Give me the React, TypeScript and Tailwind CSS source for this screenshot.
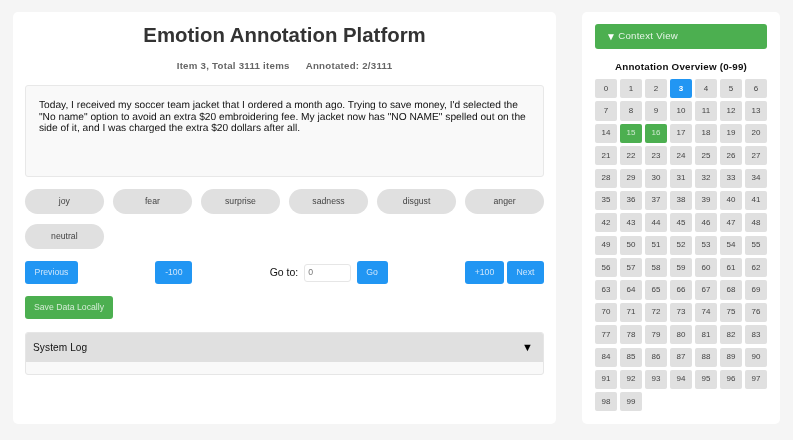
import React from "react";

const emotions = ["joy", "fear", "surprise", "sadness", "disgust", "anger", "neutral"];
const blueBtn = "h-[23px] rounded-[3px] bg-[#2196f3] text-[8.7px] text-[#cfe6fb] flex items-center justify-center";

export default function App() {
  return (
    <div className="h-[440px] w-[793px] overflow-hidden bg-[#f5f5f5] pt-[12px] pl-[13px] flex gap-[26px] font-['Liberation_Sans',Arial,sans-serif] blur-[0.25px]">
      <main className="w-[543px] h-[412px] rounded-[5px] bg-white px-[12px] pt-[11px] flex flex-col">
        <h1 className="text-center text-[20.4px] leading-[25px] font-bold text-[#333]">Emotion Annotation Platform</h1>
        <div className="mt-[12px] flex justify-center gap-[16px] text-[9.7px] leading-[12px] font-bold text-[#666] tracking-[0.25px]">
          <span>Item 3, Total 3111 items</span>
          <span>Annotated: 2/3111</span>
        </div>
        <div className="mt-[13px] h-[92px] rounded-[3px] border border-[#e8e8e8] bg-[#f9f9f9] px-[13px] pt-[14px] text-[10.2px] leading-[11.6px] text-[#111] [text-rendering:geometricPrecision]">
          Today, I received my soccer team jacket that I ordered a month ago. Trying to save money, I'd selected the "No name" option to avoid an extra $20 embroidering fee. My jacket now has "NO NAME" spelled out on the side of it, and I was charged the extra $20 dollars after all.
        </div>
        <div className="mt-[12px] grid grid-cols-6 gap-x-[9.4px] gap-y-[10px]">
          {emotions.map((e) => (
            <div key={e} className="h-[25px] rounded-full bg-[#e0e0e0] flex items-center justify-center text-[8.7px] text-[#444]">{e}</div>
          ))}
        </div>
        <div className="mt-[12px] flex items-center justify-between">
          <div className={`${blueBtn} w-[53px]`}>Previous</div>
          <div className={`${blueBtn} w-[37px]`}>-100</div>
          <div className="flex items-center">
            <span className="w-[28px] whitespace-nowrap text-[10.5px] text-[#111]">Go to:</span>
            <div className="ml-[6px] h-[18px] w-[47px] rounded-[3px] border border-[#e6e6e6] bg-white pl-[3.5px] flex items-center text-[8.7px] text-[#777]">0</div>
            <div className={`${blueBtn} ml-[6px] w-[31px]`}>Go</div>
          </div>
          <div className="flex gap-[3px]">
            <div className={`${blueBtn} w-[39px]`}>+100</div>
            <div className={`${blueBtn} w-[37px]`}>Next</div>
          </div>
        </div>
        <div className="mt-[12px] h-[23px] w-[88px] rounded-[3px] bg-[#4caf50] flex items-center justify-center text-[8.7px] text-[#d5ecd6]">Save Data Locally</div>
        <div className="mt-[13px] h-[43px] rounded-[3px] border border-[#e6e6e6] bg-[#f9f9f9] overflow-hidden">
          <div className="h-[29px] bg-[#e0e0e0] pl-[7px] pr-[10px] flex items-center justify-between text-[10.1px] text-[#111] tracking-[0.1px]">
            <span>System Log</span>
            <span className="text-[11px] text-black">▼</span>
          </div>
        </div>
      </main>
      <aside className="w-[198px] h-[412px] rounded-[5px] bg-white px-[13px] pt-[12px]">
        <div className="h-[25px] rounded-[3px] bg-[#4caf50] pl-[11px] flex items-center gap-[2px] text-[9.7px] text-[#e6f4e7] tracking-[0.25px]">
          <span className="text-[10px] text-white">▼</span>
          <span>Context View</span>
        </div>
        <h2 className="mt-[12px] text-center text-[9.8px] leading-[12px] font-bold text-[#111] tracking-[0.2px]">Annotation Overview (0-99)</h2>
        <div className="mt-[6px] grid grid-cols-7 gap-x-[3.2px] gap-y-[3.2px]">
          {Array.from({ length: 100 }, (_, i) => (
            <div
              key={i}
              className={
                i === 3
                  ? "h-[19.2px] rounded-[2px] bg-[#2196f3] text-white font-bold flex items-center justify-center text-[8px]"
                  : i === 15 || i === 16
                  ? "h-[19.2px] rounded-[2px] bg-[#4caf50] text-[#cfe9d0] flex items-center justify-center text-[8px]"
                  : "h-[19.2px] rounded-[2px] bg-[#e0e0e0] text-[#444] flex items-center justify-center text-[8px]"
              }
            >
              {i}
            </div>
          ))}
        </div>
      </aside>
    </div>
  );
}
